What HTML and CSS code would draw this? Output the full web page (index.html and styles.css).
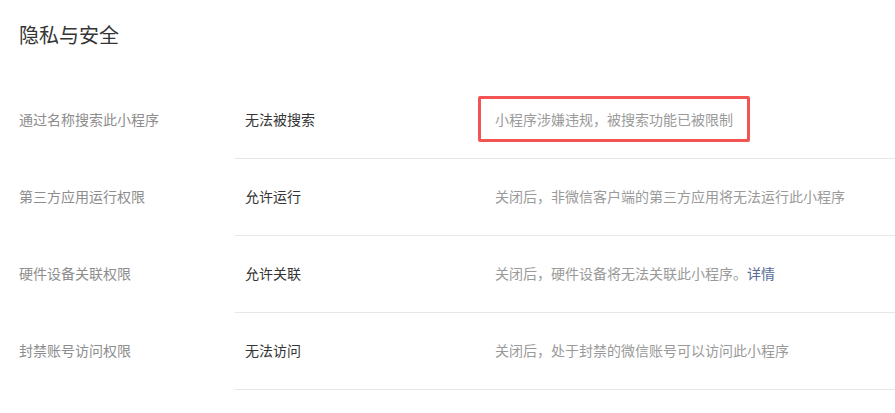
FILE: index.html
```html
<!DOCTYPE html>
<html lang="zh-CN">
<head>
    <meta charset="UTF-8">
    <meta name="viewport" content="width=device-width, initial-scale=1.0">
    <title>隐私与安全</title>
    <link rel="stylesheet" href="styles.css">
</head>
<body>
    <div class="settings-panel">
        <h2 class="panel-title">隐私与安全</h2>

        <div class="setting-list">
            <div class="setting-row">
                <div class="setting-label">通过名称搜索此小程序</div>
                <div class="setting-body">
                    <div class="setting-value">无法被搜索</div>
                    <div class="setting-desc">
                        <span class="desc-flagged">小程序涉嫌违规，被搜索功能已被限制</span>
                    </div>
                </div>
            </div>

            <div class="setting-row">
                <div class="setting-label">第三方应用运行权限</div>
                <div class="setting-body">
                    <div class="setting-value">允许运行</div>
                    <div class="setting-desc">关闭后，非微信客户端的第三方应用将无法运行此小程序</div>
                </div>
            </div>

            <div class="setting-row">
                <div class="setting-label">硬件设备关联权限</div>
                <div class="setting-body">
                    <div class="setting-value">允许关联</div>
                    <div class="setting-desc">关闭后，硬件设备将无法关联此小程序。<a href="#" class="desc-link">详情</a></div>
                </div>
            </div>

            <div class="setting-row">
                <div class="setting-label">封禁账号访问权限</div>
                <div class="setting-body">
                    <div class="setting-value">无法访问</div>
                    <div class="setting-desc">关闭后，处于封禁的微信账号可以访问此小程序</div>
                </div>
            </div>
        </div>
    </div>
</body>
</html>
```

FILE: styles.css
```css
* {
    margin: 0;
    padding: 0;
    box-sizing: border-box;
}

body {
    font-family: "Noto Sans CJK SC", "Noto Sans", "Liberation Sans", sans-serif;
    background: #fff;
    color: #353535;
}

.settings-panel {
    padding: 21px 0 0 19px;
}

.panel-title {
    font-size: 20px;
    font-weight: 400;
    line-height: 28px;
    color: #353535;
    margin-bottom: 33px;
}

.setting-row {
    display: flex;
    height: 77px;
}

.setting-label {
    width: 216px;
    flex-shrink: 0;
    display: flex;
    align-items: center;
    padding-bottom: 3px;
    font-size: 14px;
    color: #8d8d8d;
}

.setting-body {
    flex: 1;
    display: flex;
    align-items: center;
    padding-left: 10px;
    padding-bottom: 2px;
    border-bottom: 1px solid #e7e7e7;
    font-size: 14px;
}

.setting-value {
    width: 250px;
    flex-shrink: 0;
    color: #353535;
}

.setting-desc {
    color: #9a9a9a;
    line-height: 20px;
}

.desc-flagged {
    display: inline-block;
    border: 3px solid #f25353;
    border-radius: 2px;
    padding: 10px 14px;
    margin: -13px -17px;
}

.desc-link {
    color: #576b95;
    text-decoration: none;
}
```
